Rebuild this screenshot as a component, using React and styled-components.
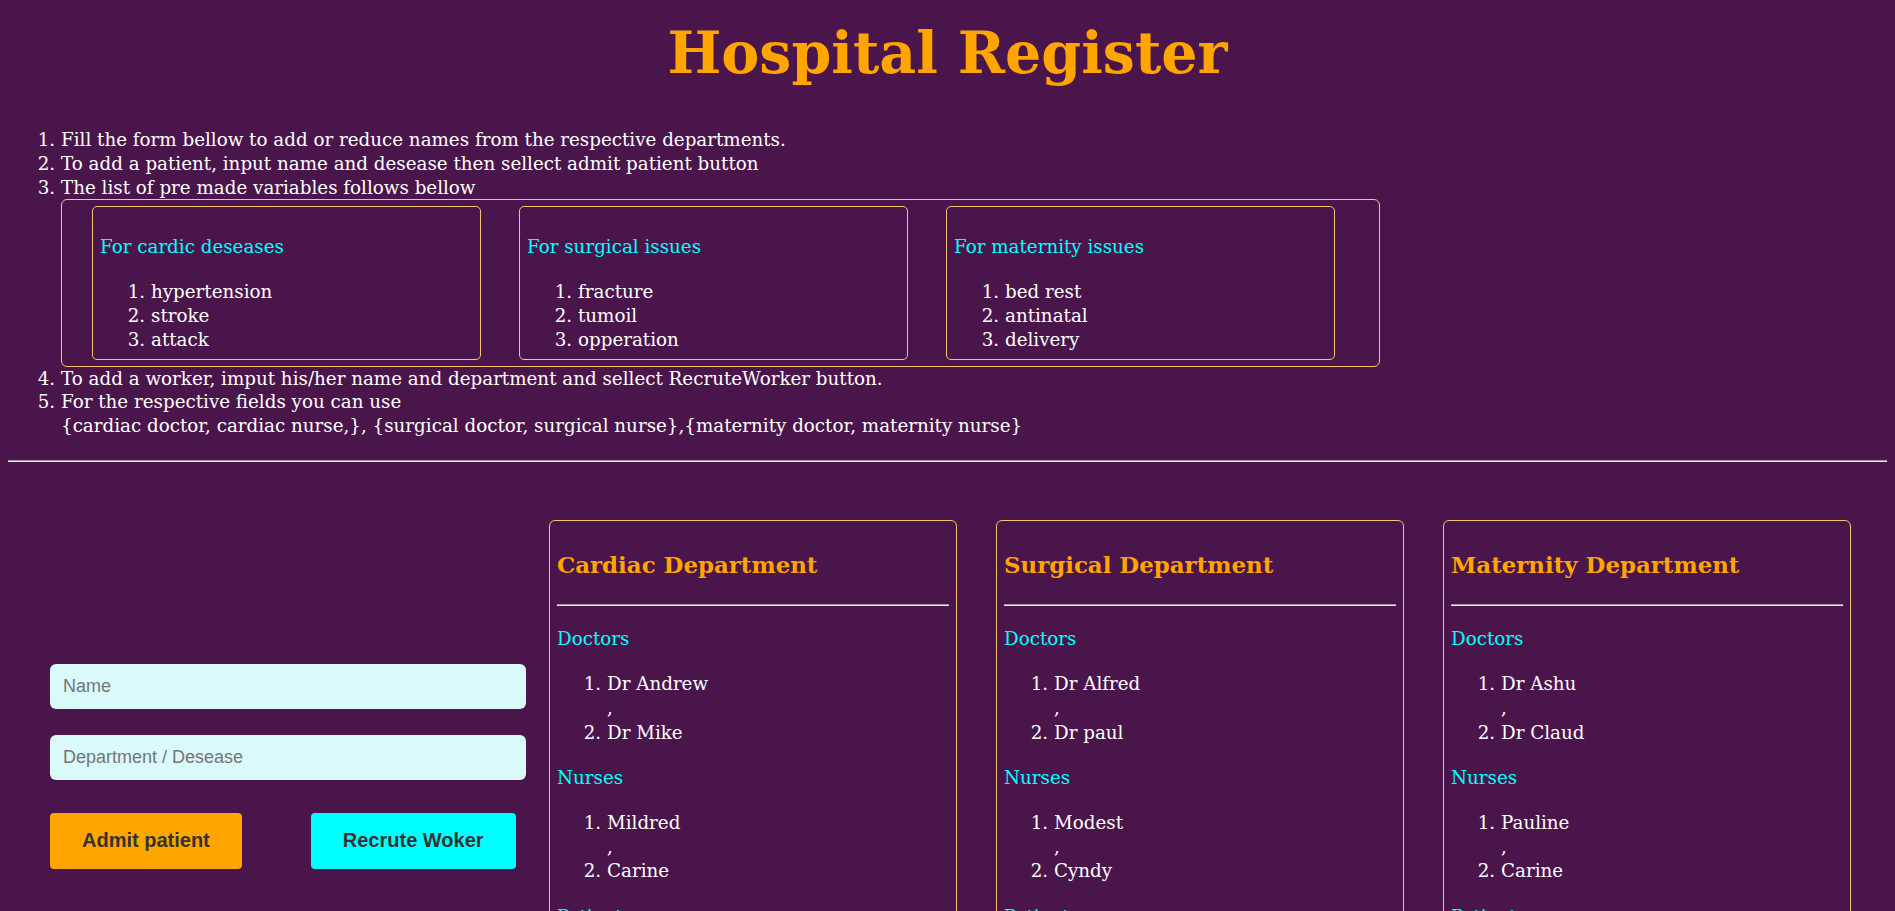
import React, { useState } from 'react'
import styled, { createGlobalStyle } from 'styled-components'

const GlobalStyle = createGlobalStyle`
  body {
    margin: 0;
    background-color: #4a154b;
    color: #ffffff;
    font-family: "DejaVu Serif", Georgia, serif;
  }
`

const variables = [
  { title: 'For cardic deseases', items: ['hypertension', 'stroke', 'attack'] },
  { title: 'For surgical issues', items: ['fracture', 'tumoil', 'opperation'] },
  { title: 'For maternity issues', items: ['bed rest', 'antinatal', 'delivery'] },
]

const initialDepartments = [
  { name: 'Cardiac Department', doctors: ['Dr Andrew', 'Dr Mike'], nurses: ['Mildred', 'Carine'], patients: [] },
  { name: 'Surgical Department', doctors: ['Dr Alfred', 'Dr paul'], nurses: ['Modest', 'Cyndy'], patients: [] },
  { name: 'Maternity Department', doctors: ['Dr Ashu', 'Dr Claud'], nurses: ['Pauline', 'Carine'], patients: [] },
]

function NameGroup({ label, names }) {
  return (
    <>
      <GroupTitle>{label}</GroupTitle>
      <NameList>
        {names.map((n, i) => (
          <React.Fragment key={n + i}>
            {i > 0 && ','}
            <li>{n}</li>
          </React.Fragment>
        ))}
      </NameList>
    </>
  )
}

function App() {
  const [departments] = useState(initialDepartments)
  const [name, setName] = useState('')
  const [field, setField] = useState('')

  return (
    <>
      <GlobalStyle />
      <Page>
        <Title>Hospital Register</Title>
        <Instructions>
          <li>Fill the form bellow to add or reduce names from the respective departments.</li>
          <li>To add a patient, input name and desease then sellect admit patient button</li>
          <li>
            The list of pre made variables follows bellow
            <VariablesBox>
              {variables.map((v) => (
                <VariableCard key={v.title}>
                  <VariableTitle>{v.title}</VariableTitle>
                  <VariableList>
                    {v.items.map((it) => <li key={it}>{it}</li>)}
                  </VariableList>
                </VariableCard>
              ))}
            </VariablesBox>
          </li>
          <li>To add a worker, imput his/her name and department and sellect RecruteWorker button.</li>
          <li>
            For the respective fields you can use
            <br />
            {'{cardiac doctor, cardiac nurse,}, {surgical doctor, surgical nurse},{maternity doctor, maternity nurse}'}
          </li>
        </Instructions>
        <Divider />
        <Workspace>
          <Form onSubmit={(e) => e.preventDefault()}>
            <Input placeholder="Name" value={name} onChange={(e) => setName(e.target.value)} />
            <Input placeholder="Department / Desease" value={field} onChange={(e) => setField(e.target.value)} />
            <ButtonRow>
              <Button type="button" $color="#ffa500">Admit patient</Button>
              <Button type="button" $color="#00ffff">Recrute Woker</Button>
            </ButtonRow>
          </Form>
          <Departments>
            {departments.map((d) => (
              <DepartmentCard key={d.name}>
                <DeptTitle>{d.name}</DeptTitle>
                <DeptRule />
                <NameGroup label="Doctors" names={d.doctors} />
                <NameGroup label="Nurses" names={d.nurses} />
                <NameGroup label="Patients" names={d.patients} />
              </DepartmentCard>
            ))}
          </Departments>
        </Workspace>
      </Page>
    </>
  )
}

export default App

const Page = styled.div`
  padding: 8px;
`

const Title = styled.h1`
  margin: 8px 0 39px;
  text-align: center;
  color: #ffa500;
  font-size: 57px;
  line-height: 73px;
  font-weight: bold;
`

const Instructions = styled.ol`
  margin: 0;
  padding-left: 53px;
  font-size: 18.3px;
  line-height: 23.8px;
`

const VariablesBox = styled.div`
  box-sizing: border-box;
  width: 1319px;
  display: flex;
  gap: 38px;
  padding: 6px 30px 6px 30px;
  border: 1px solid #f7c56d;
  border-radius: 6px;
`

const VariableCard = styled.div`
  box-sizing: border-box;
  width: 389px;
  padding: 0 7px 7px;
  border: 1px solid #f7c56d;
  border-radius: 5px;
`

const VariableTitle = styled.p`
  margin: 28px 0 21px;
  color: #00ffff;
`

const VariableList = styled.ol`
  margin: 0;
  padding-left: 51px;
`

const Divider = styled.hr`
  margin: 22px 0 0;
  border: none;
  border-top: 1px solid #9c9c9c;
  border-bottom: 1px solid #e8e8e8;
`

const Workspace = styled.div`
  display: flex;
  align-items: flex-start;
  padding-top: 58px;
`

const Form = styled.form`
  width: 476px;
  margin: 144px 0 0 42px;
  display: flex;
  flex-direction: column;
  gap: 26px;
`

const Input = styled.input`
  box-sizing: border-box;
  height: 45px;
  padding: 0 13px;
  border: none;
  outline: none;
  border-radius: 6px;
  background-color: #dafafa;
  font-family: "Liberation Sans", Arial, sans-serif;
  font-size: 18px;
  color: #333;

  &::placeholder {
    color: #757575;
  }
`

const ButtonRow = styled.div`
  display: flex;
  gap: 69px;
  margin-top: 7px;
`

const Button = styled.button`
  height: 56px;
  padding: 0 32px;
  border: none;
  border-radius: 4px;
  background-color: ${(p) => p.$color};
  color: #333;
  font-family: "Liberation Sans", Arial, sans-serif;
  font-size: 20px;
  font-weight: bold;
  cursor: pointer;
`

const Departments = styled.div`
  display: flex;
  gap: 39px;
  margin-left: 23px;
`

const DepartmentCard = styled.div`
  box-sizing: border-box;
  width: 408px;
  padding: 0 7px 20px;
  border: 1px solid #f7c56d;
  border-radius: 6px;
  font-size: 18.3px;
  line-height: 24.2px;
`

const DeptTitle = styled.h2`
  margin: 30px 0 26px;
  color: #ffa500;
  font-size: 22.9px;
  line-height: 27px;
`

const DeptRule = styled.hr`
  margin: 0;
  border: none;
  border-top: 1px solid #9c9c9c;
  border-bottom: 1px solid #e8e8e8;
`

const GroupTitle = styled.p`
  margin: 21px 0;
  color: #00ffff;
`

const NameList = styled.ol`
  margin: 0;
  padding-left: 50px;
`
